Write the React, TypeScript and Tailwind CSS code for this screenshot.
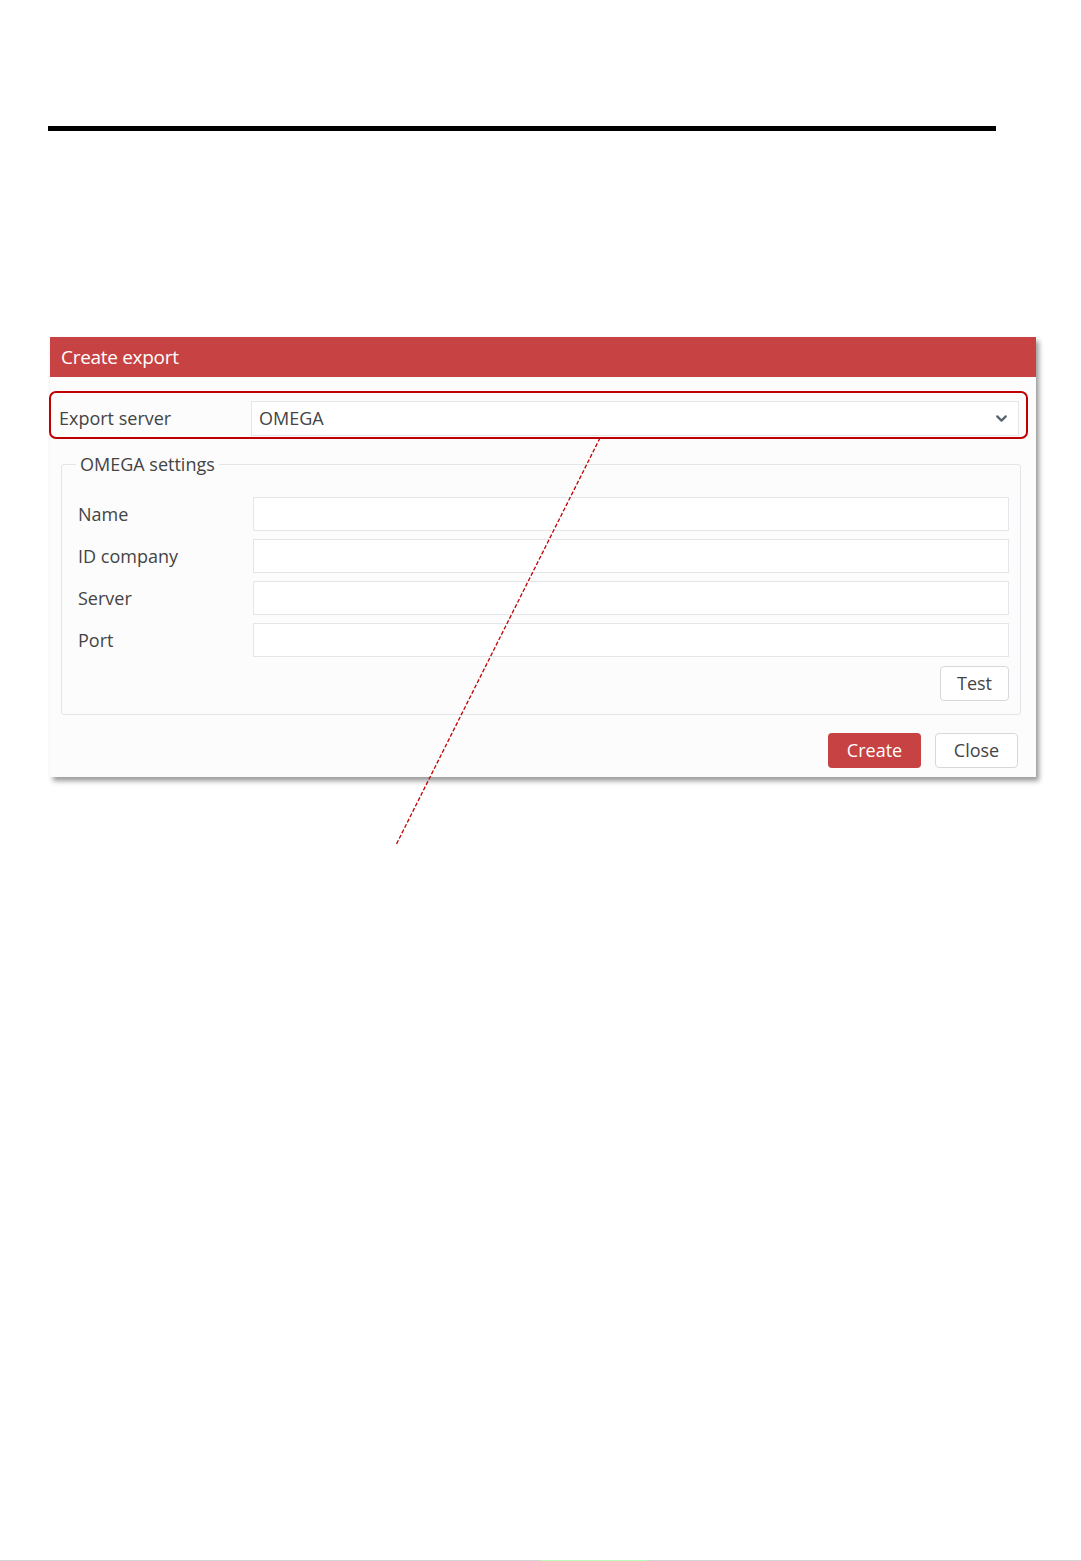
import { ChevronDown } from 'lucide-react';

const FIELDS = ['Name', 'ID company', 'Server', 'Port'];

export default function App() {
  return (
    <div
      className="relative w-[1081px] h-[1561px] bg-white flex flex-col text-[#444]"
      style={{ fontFamily: '"Open Sans", "Noto Sans", sans-serif' }}
    >
      {/* Black rule */}
      <div className="pt-[126px] pl-[48px]">
        <div className="h-[5px] w-[948px] bg-black" />
      </div>

      {/* Dialog */}
      <div className="ml-[50px] mt-[206px] w-[986px] shadow-[3px_4px_5px_rgba(0,0,0,0.4)]">
        <div className="h-[40px] bg-[#c74242] px-[11px] flex items-center text-white text-[19px] tracking-[-0.3px]">
          Create export
        </div>

        <div className="bg-[#fcfcfc] pt-[24px] pb-[9px] pl-[11px] pr-[15px]">
          {/* Export server */}
          <div className="flex items-center -ml-[2px] pr-[2px]">
            <span className="w-[192px] text-[18px]">Export server</span>
            <div className="flex-1 h-[35px] border border-[#e4e6ea] bg-white flex items-center justify-between pl-[7px] pr-[8px]">
              <span className="text-[18px]">OMEGA</span>
              <ChevronDown size={17} strokeWidth={3.2} className="text-[#5a6470]" />
            </div>
          </div>

          {/* Settings */}
          <fieldset className="mt-[16px] border border-[#e3e5e9] rounded-[3px] pl-[16px] pr-[11px] pb-[13px]">
            <legend className="-ml-[2px] px-[4px] text-[18px] leading-[24px]">
              OMEGA settings
            </legend>
            <div className="mt-[21px] flex flex-col gap-[8px]">
              {FIELDS.map(f => (
                <div key={f} className="flex items-center">
                  <span className="w-[175px] text-[18px]">{f}</span>
                  <div className="flex-1 h-[34px] border border-[#e4e6ea] bg-white" />
                </div>
              ))}
            </div>
            <div className="mt-[9px] flex justify-end">
              <button className="w-[69px] h-[35px] border border-[#d6d8dc] rounded-[4px] bg-white text-[18px]">
                Test
              </button>
            </div>
          </fieldset>

          {/* Footer buttons */}
          <div className="mt-[18px] flex justify-end gap-[14px] pr-[3px]">
            <button className="w-[93px] h-[35px] rounded-[4px] bg-[#c74242] text-white text-[18px]">
              Create
            </button>
            <button className="w-[83px] h-[35px] rounded-[4px] border border-[#d6d8dc] bg-white text-[18px]">
              Close
            </button>
          </div>
        </div>
      </div>

      {/* Bottom edge */}
      <div className="mt-auto h-px bg-[#d4d4d4] flex">
        <div className="ml-[541px] w-[106px] bg-[#b4ffb4]" />
      </div>

      {/* Annotation: highlight box */}
      <div className="absolute left-[49px] top-[391px] w-[979px] h-[48px] border-2 border-[#c00000] rounded-[7px] pointer-events-none" />

      {/* Annotation: dashed pointer */}
      <svg className="absolute inset-0 pointer-events-none" width="1081" height="1561">
        <line x1="600" y1="438" x2="396" y2="845" stroke="#c00000" strokeWidth="1.3" strokeDasharray="4 2" />
      </svg>
    </div>
  );
}
